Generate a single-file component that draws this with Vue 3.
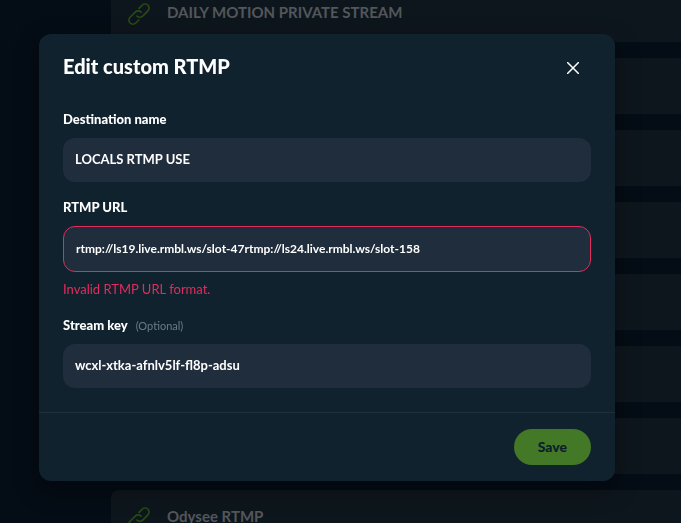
<script setup>
import { ref, computed } from 'vue'

const destinations = [
  'DAILY MOTION PRIVATE STREAM', '', '', '', '', '', '', 'Odysee RTMP',
]
const name = ref('LOCALS RTMP USE')
const url = ref('rtmp://ls19.live.rmbl.ws/slot-47rtmp://ls24.live.rmbl.ws/slot-158')
const streamKey = ref('wcxl-xtka-afnlv5lf-fl8p-adsu')
const open = ref(true)

const urlInvalid = computed(() => !/^rtmps?:\/\/[^:\s]+(:\d+)?(\/[^:\s]*)?$/.test(url.value))
</script>

<template>
  <div class="page">
    <ul class="destinations">
      <li v-for="(title, i) in destinations" :key="i" class="destination">
        <template v-if="title">
          <svg class="link-icon" viewBox="0 0 24 24" aria-hidden="true">
            <path d="M12 6.4l3.2-3.2a4 4 0 0 1 5.7 5.7l-5.2 5.2a4 4 0 0 1-5.7 0" />
            <path d="M12 17.8l-3.2 3.2a4 4 0 0 1-5.7-5.7l5.2-5.2a4 4 0 0 1 5.7 0" />
          </svg>
          <span>{{ title }}</span>
        </template>
      </li>
    </ul>

    <div v-if="open" class="overlay">
      <form class="modal" role="dialog" aria-labelledby="modal-title" novalidate @submit.prevent>
        <header class="modal-header">
          <h1 id="modal-title">Edit custom RTMP</h1>
          <button type="button" class="close" aria-label="Close" @click="open = false">
            <svg viewBox="0 0 12 12" aria-hidden="true">
              <path d="M0.5 0.5l11 11M11.5 0.5l-11 11" />
            </svg>
          </button>
        </header>

        <div class="modal-body">
          <div class="field">
            <label for="name">Destination name</label>
            <input id="name" v-model="name" type="text" />
          </div>
          <div class="field">
            <label for="url">RTMP URL</label>
            <input
              id="url"
              v-model="url"
              type="text"
              :class="{ invalid: urlInvalid }"
              :aria-invalid="urlInvalid"
              aria-describedby="url-error"
            />
            <p v-if="urlInvalid" id="url-error" class="error">Invalid RTMP URL format.</p>
          </div>
          <div class="field">
            <label for="key">Stream key <span class="optional">(Optional)</span></label>
            <input id="key" v-model="streamKey" type="text" />
          </div>
        </div>

        <footer class="modal-footer">
          <button type="submit" class="save">Save</button>
        </footer>
      </form>
    </div>
  </div>
</template>

<style>
body {
  background: #040c15;
  overflow: hidden;
}
</style>

<style scoped>
.page {
  height: 100vh;
  overflow: hidden;
  box-sizing: border-box;
  font-family: Lato, "Open Sans", sans-serif;
  color: #ffffff;
}

.destinations {
  list-style: none;
  margin: -14px 0 0 111px;
  padding: 0;
  display: flex;
  flex-direction: column;
  gap: 16px;
}

.destination {
  flex: none;
  height: 56px;
  box-sizing: border-box;
  padding: 0 16px;
  display: flex;
  align-items: center;
  gap: 16px;
  background: #0e161d;
  border-radius: 8px 0 0 8px;
  color: #53575b;
  font-size: 15px;
  line-height: 20px;
  font-weight: 700;
}

.destination span {
  padding-bottom: 4px;
}

.link-icon {
  width: 24px;
  height: 24px;
  fill: none;
  stroke: #294c15;
  stroke-width: 1.6;
  stroke-linecap: round;
}

.overlay {
  position: fixed;
  inset: 0;
  padding: 34px 66px 42px 39px;
}

.modal {
  background: #11222f;
  border-radius: 12px;
  box-shadow: 0 8px 24px rgba(0, 0, 0, 0.4);
}

.modal-header {
  height: 68px;
  padding: 0 24px;
  display: flex;
  align-items: center;
  justify-content: space-between;
}

h1 {
  margin: 0;
  padding-bottom: 4px;
  font-size: 20px;
  line-height: 28px;
  font-weight: 900;
}

.close {
  width: 36px;
  height: 36px;
  padding: 0;
  border: 0;
  background: none;
  display: grid;
  place-items: center;
  cursor: pointer;
}

.close svg {
  width: 12px;
  height: 12px;
  fill: none;
  stroke: #ffffff;
  stroke-width: 1.5;
  stroke-linecap: round;
}

.modal-body {
  padding: 8px 24px 24px;
  display: flex;
  flex-direction: column;
  gap: 16px;
}

.field {
  display: flex;
  flex-direction: column;
}

label {
  margin-bottom: 10px;
  display: flex;
  align-items: baseline;
  gap: 8px;
  font-size: 13px;
  line-height: 18px;
  font-weight: 900;
}

.optional {
  font-size: 11px;
  line-height: 12px;
  font-weight: 400;
  color: #6b7a8b;
}

input {
  width: 100%;
  box-sizing: border-box;
  height: 44px;
  padding: 0 12px 2px;
  border: 0;
  border-radius: 12px;
  outline: none;
  background: #1f2d3c;
  color: #ffffff;
  font-family: inherit;
  font-size: 13px;
  font-weight: 700;
}

input.invalid {
  height: 46px;
  border: 1px solid #e02d5b;
  font-size: 12px;
}

.error {
  margin: 8px 0 2px;
  color: #e02d5b;
  font-size: 13px;
  line-height: 18px;
}

.modal-footer {
  padding: 16px 24px;
  border-top: 1px solid #1f2f3d;
  display: flex;
  justify-content: flex-end;
}

.save {
  height: 36px;
  padding: 0 24px 2px;
  border: 0;
  border-radius: 18px;
  background: #437827;
  color: #0b1f2b;
  font-family: inherit;
  font-size: 14px;
  font-weight: 900;
  cursor: pointer;
}
</style>
